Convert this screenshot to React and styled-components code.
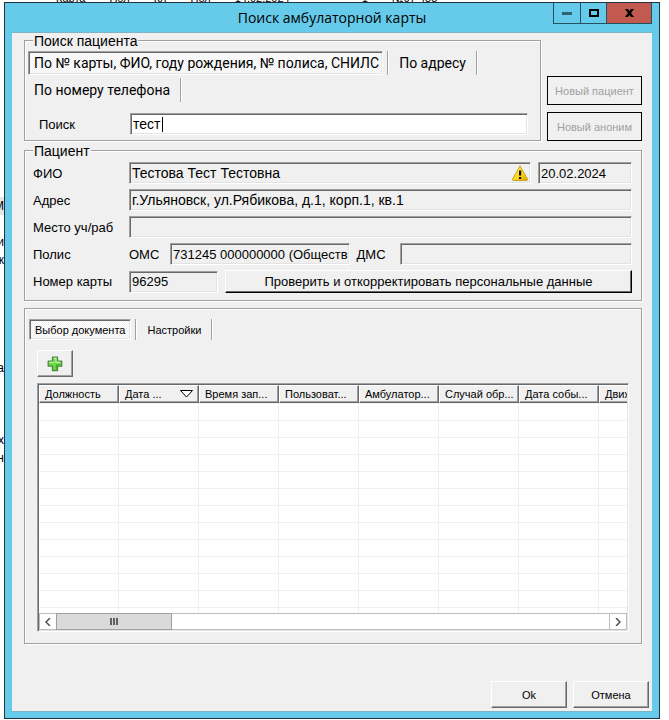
import React, { useState } from 'react';
import styled, { createGlobalStyle, css } from 'styled-components';

const GlobalStyle = createGlobalStyle`
  * {
    box-sizing: border-box;
  }

  body {
    margin: 0;
    background: #fff;
    color: #000;
    font-family: 'Liberation Sans', Arial, sans-serif;
    font-size: 14px;
  }

  button,
  input {
    font: inherit;
    color: inherit;
    border-radius: 0;
    outline: none;
  }
`;

const sunken = css`
  border: 1px solid;
  border-color: #a0a0a0 #fff #fff #a0a0a0;
  box-shadow: inset 1px 1px 0 #696969, inset -1px -1px 0 #e3e3e3;
`;

const raised = css`
  border: 1px solid;
  border-color: #fff #696969 #696969 #fff;
  box-shadow: inset -1px -1px 0 #a0a0a0;
`;

const etched = css`
  border: 1px solid #a0a0a0;
  box-shadow: inset 1px 1px 0 #fff, 1px 1px 0 #fff;
`;

/* ---------- what is seen behind the dialog ---------- */

const Desktop = styled.div`
  display: grid;
  grid-template-columns: 4px minmax(0, 1fr) 9px;
  grid-template-rows: 2px minmax(0, 1fr) 1px;
  height: 100vh;
  min-height: 640px;
  overflow: hidden;
`;

const BackTop = styled.div`
  grid-column: 1 / -1;
  display: flex;
  align-items: flex-end;
  gap: 24px;
  padding-left: 56px;
  overflow: hidden;
  font-size: 11px;
  line-height: 8px;
`;

const BackLeft = styled.div`
  grid-row: 2;
  margin-top: -3px;
  overflow: hidden;
  font-size: 12px;
  line-height: 18px;
`;

const BackLine = styled.div`
  display: flex;
  justify-content: flex-end;
  height: 18px;
  background: ${({ selected }) => (selected ? '#e6e6e6' : 'transparent')};
`;

/* ---------- window frame ---------- */

const Window = styled.div`
  grid-row: 2;
  grid-column: 2;
  display: flex;
  flex-direction: column;
  padding: 0 7px 6px;
  border: 1px solid #24343c;
  background: #66caea;
`;

const TitleBar = styled.header`
  display: grid;
  grid-template-columns: 1fr auto 1fr;
  height: 29px;
`;

const Title = styled.h1`
  grid-column: 2;
  margin: 0;
  font-family: 'Open Sans', 'Noto Sans', sans-serif;
  font-size: 14px;
  font-weight: 400;
  line-height: 29px;
  white-space: nowrap;
`;

const WindowButtons = styled.div`
  display: flex;
  justify-self: end;
  height: 21px;
  border: 1px solid #24505f;
  border-top: 0;
`;

const WindowButton = styled.button`
  display: flex;
  align-items: center;
  justify-content: center;
  width: ${({ close }) => (close ? '45px' : '26px')};
  padding: 0;
  border: 0;
  border-left: ${({ first }) => (first ? '0' : '1px solid #24505f')};
  background: ${({ close }) => (close ? '#c35a50' : 'transparent')};
`;

const Client = styled.main`
  display: flex;
  flex: 1;
  flex-direction: column;
  min-height: 0;
  border: 1px solid #7fb3c6;
  border-width: 1px 0;
  background: #f0f0f0;
`;

const Content = styled.div`
  display: flex;
  flex: 1;
  flex-direction: column;
  gap: 2px;
  min-height: 0;
  padding: 0 10px 0 12px;
`;

/* ---------- shared parts ---------- */

const Group = styled.fieldset`
  ${etched}
  min-width: 0;
  margin: 0;
  padding: 4px 3px 5px;
`;

const Legend = styled.legend`
  margin-left: 5px;
  padding: 2px 1px 0;
  background: #f0f0f0;
  line-height: 12px;
`;

const TabRow = styled.div`
  display: flex;
  flex-wrap: wrap;
  row-gap: 3px;
`;

const TabCell = styled.div`
  display: flex;
  padding-right: 4px;
  margin-right: ${({ active }) => (active ? '5px' : '0')};
  border-right: 1px solid #a0a0a0;
  box-shadow: 1px 0 0 #fff;
`;

const Tab = styled.button`
  height: ${({ small }) => (small ? '21px' : '24px')};
  padding: 0 5px;
  border: 1px solid transparent;
  background: transparent;
  font-family: ${({ small }) => (small ? 'inherit' : "Roboto, 'Liberation Sans', sans-serif")};
  font-size: ${({ small }) => (small ? '11px' : '14px')};
  white-space: nowrap;

  ${({ active }) =>
    active &&
    css`
      ${sunken}
      padding: ${({ small }) => (small ? '0 5px' : '0 3px 0 5px')};
      background: repeating-conic-gradient(#fff 0 25%, #f0f0f0 0 50%) 0 0 / 2px 2px;
    `}
`;

const Label = styled.label`
  white-space: nowrap;
`;

const Field = styled.input`
  ${sunken}
  width: 100%;
  min-width: 0;
  height: 22px;
  padding: 0 1px 0 2px;
  background: ${({ readOnly }) => (readOnly ? '#f0f0f0' : '#fff')};
  font-size: ${({ wide }) => (wide ? '14px' : '13px')};
`;

const PushButton = styled.button`
  ${raised}
  height: 27px;
  padding: 0;
  background: #f0f0f0;
  font-size: 11px;
`;

/* ---------- search ---------- */

const SearchArea = styled.div`
  display: grid;
  grid-template-columns: minmax(0, 1fr) 95px;
  column-gap: 6px;
`;

const SearchRow = styled.div`
  display: grid;
  grid-template-columns: 91px minmax(0, 1fr);
  align-items: center;
  padding: 11px 9px 0 11px;
  font-size: 13px;
`;

const SearchBox = styled.div`
  position: relative;
  display: flex;
`;

const Caret = styled.span`
  position: absolute;
  top: 4px;
  bottom: 3px;
  left: 32px;
  width: 1px;
  background: #000;
`;

const SideButtons = styled.div`
  display: flex;
  flex-direction: column;
  justify-content: flex-end;
  gap: 7px;
`;

const NewButton = styled.button`
  height: 29px;
  padding: 0;
  border: 1px solid #000;
  background: #f0f0f0;
  color: #a0a0a0;
  font-size: 11px;
`;

/* ---------- patient ---------- */

const PatientGrid = styled.div`
  display: grid;
  grid-template-columns: 96px minmax(0, 1fr);
  align-items: center;
  row-gap: 5px;
  padding: 1px 6px 2px 5px;
  font-size: 13px;
`;

const FieldLine = styled.div`
  display: grid;
  grid-template-columns: ${({ columns }) => columns};
  align-items: center;
  column-gap: 7px;
`;

const NameBox = styled.div`
  position: relative;
  display: flex;
`;

const WarningIcon = styled.svg`
  position: absolute;
  top: 3px;
  right: 3px;
`;

const CheckButton = styled.button`
  height: 23px;
  padding: 0;
  border: 1px solid;
  border-color: #fff #000 #000 #fff;
  box-shadow: inset -1px -1px 0 #696969;
  background: #f0f0f0;
  white-space: nowrap;
`;

/* ---------- documents ---------- */

const Documents = styled.section`
  ${etched}
  display: flex;
  flex: 1;
  flex-direction: column;
  min-height: 0;
  margin-top: 5px;
  padding: 10px 12px 11px 4px;
`;

const AddButton = styled(PushButton)`
  display: flex;
  align-items: center;
  justify-content: center;
  flex-shrink: 0;
  width: 36px;
  margin: 10px 0 6px 8px;
`;

const ListView = styled.div`
  ${sunken}
  display: flex;
  flex: 1;
  flex-direction: column;
  min-height: 0;
  margin-left: 8px;
  padding: 1px;
  background: #fff;
`;

const ListBody = styled.div`
  flex: 1;
  min-height: 0;
  overflow: hidden;
`;

const Table = styled.table`
  width: 640px;
  table-layout: fixed;
  border-collapse: separate;
  border-spacing: 0;
  font-size: 11px;
`;

const HeadCell = styled.th`
  height: 18px;
  padding: 0 5px;
  border: 1px solid;
  border-color: #fff #696969 #696969 #fff;
  box-shadow: inset -1px -1px 0 #a0a0a0;
  background: #f0f0f0;
  font-weight: 400;
  line-height: 14px;
  text-align: left;
  white-space: nowrap;
`;

const HeadText = styled.span`
  display: flex;
  align-items: center;
  justify-content: space-between;
`;

const Cell = styled.td`
  height: 17px;
  padding: 0;
  border-top: 1px solid #f0f0f0;
  border-right: 1px solid #f0f0f0;
`;

const ScrollBar = styled.div`
  display: grid;
  grid-template-columns: 16px minmax(0, 1fr) 17px;
  height: 17px;
  border: 1px solid #bcbcbc;
`;

const ScrollArrow = styled.button`
  display: flex;
  align-items: center;
  justify-content: center;
  padding: 0;
  border: 0 solid #bcbcbc;
  border-left-width: ${({ end }) => (end ? '1px' : '0')};
  background: #fff;
`;

const ScrollThumb = styled.div`
  display: flex;
  align-items: center;
  justify-content: center;
  gap: 1px;
  width: 21%;
  margin: -1px 0;
  border: 1px solid #a0a0a0;
  background: #dadada;
`;

const Grip = styled.i`
  width: 2px;
  height: 7px;
  background: #606060;
`;

const Footer = styled.footer`
  display: grid;
  grid-template-columns: 76px 76px;
  justify-content: end;
  column-gap: 6px;
  padding: 37px 3px 3px;
`;

const backLines = { 11: 'М', 13: 'и', 14: 'к', 20: 'а', 24: 'х', 25: 'н' };

const columns = [
  'Должность',
  'Дата ...',
  'Время зап...',
  'Пользоват...',
  'Амбулатор...',
  'Случай обр...',
  'Дата собы...',
  'Движение',
];

const rows = Array.from({ length: 13 }, (_, i) => i);

function Backdrop() {
  return (
    <>
      <BackTop aria-hidden="true">
        <span>Карта</span>
        <span>Пол</span>
        <span>Кл</span>
        <span>Пол</span>
        <span>14.02.2024</span>
        <span />
        <span />
        <span>1</span>
        <span>№97 488</span>
      </BackTop>
      <BackLeft aria-hidden="true">
        {Array.from({ length: 30 }, (_, i) => (
          <BackLine key={i} selected={i === 11}>{backLines[i]}</BackLine>
        ))}
      </BackLeft>
    </>
  );
}

function TitleButtons() {
  return (
    <WindowButtons>
      <WindowButton first aria-label="Свернуть">
        <svg width="10" height="3"><path d="M0 0h10v3H0z" fill="#2f6475" /></svg>
      </WindowButton>
      <WindowButton aria-label="Развернуть">
        <svg width="10" height="8"><path d="M1 1h8v6H1z" fill="none" stroke="#000" strokeWidth="2" /></svg>
      </WindowButton>
      <WindowButton close aria-label="Закрыть">
        <svg width="9" height="8" viewBox="0 0 9 8">
          <path d="M0 0h3l1.500 2L6 0h3L6 4l3 4H6L4.500 6 3 8H0l3-4z" fill="#000" />
        </svg>
      </WindowButton>
    </WindowButtons>
  );
}

function Warning() {
  return (
    <WarningIcon width="16" height="16" viewBox="0 0 16 16" role="img" aria-label="Внимание">
      <defs>
        <linearGradient id="warn" x1="0" y1="0" x2="1" y2="1">
          <stop offset="0" stopColor="#fff27a" />
          <stop offset="0.6" stopColor="#fbd51c" />
          <stop offset="1" stopColor="#dba400" />
        </linearGradient>
      </defs>
      <path d="M8 .8 15.500 14.200q.2 1.200-1 1.300h-13q-1.200-.1-1-1.300z" fill="url(#warn)" stroke="#c79c12" strokeWidth=".9" strokeLinejoin="round" />
      <path d="M7 5.500h2.200v5H7zM7 12h2.200v2H7z" fill="#111" />
    </WarningIcon>
  );
}

function Plus() {
  return (
    <svg width="16" height="16" viewBox="0 0 16 16">
      <path d="M5.500 1.200h5v4h4.200v5h-4.200v4.500h-5v-4.500H1.200v-5h4.300z" fill="#6fd943" stroke="#4b8a45" strokeWidth="1.300" strokeLinejoin="round" />
      <path d="M6.700 2.400h2.200v4H13M2.400 6.400h4.300" fill="none" stroke="#c4f5a4" strokeWidth="1.100" />
      <path d="M9.300 13.500V9H13.500" fill="none" stroke="#2fae1c" strokeWidth="1" />
    </svg>
  );
}

function Tabs({ items, small }) {
  return (
    <TabRow role="tablist">
      {items.map((item, index) => (
        <TabCell key={item} active={index === 0}>
          <Tab role="tab" aria-selected={index === 0} active={index === 0} small={small}>{item}</Tab>
        </TabCell>
      ))}
    </TabRow>
  );
}

function App() {
  const [query, setQuery] = useState('тест');

  return (
    <Desktop>
      <GlobalStyle />
      <Backdrop />
      <Window>
        <TitleBar>
          <Title>Поиск амбулаторной карты</Title>
          <TitleButtons />
        </TitleBar>
        <Client>
          <Content>
            <SearchArea>
              <Group>
                <Legend>Поиск пациента</Legend>
                <Tabs items={['По № карты, ФИО, году рождения, № полиса, СНИЛС', 'По адресу', 'По номеру телефона']} />
                <SearchRow>
                  <Label htmlFor="query">Поиск</Label>
                  <SearchBox>
                    <Field id="query" wide value={query} onChange={(e) => setQuery(e.target.value)} />
                    <Caret />
                  </SearchBox>
                </SearchRow>
              </Group>
              <SideButtons>
                <NewButton disabled>Новый пациент</NewButton>
                <NewButton disabled>Новый аноним</NewButton>
              </SideButtons>
            </SearchArea>

            <Group>
              <Legend>Пациент</Legend>
              <PatientGrid>
                <Label htmlFor="fio">ФИО</Label>
                <FieldLine columns="minmax(0, 1fr) 94px">
                  <NameBox>
                    <Field id="fio" wide readOnly value="Тестова Тест Тестовна" />
                    <Warning />
                  </NameBox>
                  <Field aria-label="Дата рождения" readOnly value="20.02.2024" />
                </FieldLine>

                <Label htmlFor="address">Адрес</Label>
                <Field id="address" wide readOnly value="г.Ульяновск, ул.Рябикова, д.1, корп.1, кв.1" />

                <Label htmlFor="work">Место уч/раб</Label>
                <Field id="work" readOnly value="" />

                <Label as="span">Полис</Label>
                <FieldLine columns="34px minmax(0, 180fr) 36px minmax(0, 233fr)">
                  <Label htmlFor="oms">ОМС</Label>
                  <Field id="oms" readOnly value="731245 000000000 (Обществ" />
                  <Label htmlFor="dms">ДМС</Label>
                  <Field id="dms" readOnly value="" />
                </FieldLine>

                <Label htmlFor="card">Номер карты</Label>
                <FieldLine columns="89px minmax(0, 1fr)">
                  <Field id="card" readOnly value="96295" />
                  <CheckButton>Проверить и откорректировать персональные данные</CheckButton>
                </FieldLine>
              </PatientGrid>
            </Group>

            <Documents>
              <Tabs small items={['Выбор документа', 'Настройки']} />
              <AddButton aria-label="Добавить"><Plus /></AddButton>
              <ListView>
                <ListBody>
                  <Table>
                    <thead>
                      <tr>
                        {columns.map((name, index) => (
                          <HeadCell key={name} scope="col">
                            <HeadText>
                              {name}
                              {index === 1 && (
                                <svg width="13" height="8"><path d="M.5.5h12l-6 6.500z" fill="#fff" stroke="#000" /></svg>
                              )}
                            </HeadText>
                          </HeadCell>
                        ))}
                      </tr>
                    </thead>
                    <tbody>
                      {rows.map((row) => (
                        <tr key={row}>
                          {columns.map((name) => <Cell key={name} />)}
                        </tr>
                      ))}
                    </tbody>
                  </Table>
                </ListBody>
                <ScrollBar>
                  <ScrollArrow aria-label="Влево">
                    <svg width="6" height="8"><path d="M5 0 1 4l4 4" fill="none" stroke="#505050" strokeWidth="1.500" /></svg>
                  </ScrollArrow>
                  <ScrollThumb><Grip /><Grip /><Grip /></ScrollThumb>
                  <ScrollArrow end aria-label="Вправо">
                    <svg width="6" height="8"><path d="m1 0 4 4-4 4" fill="none" stroke="#505050" strokeWidth="1.500" /></svg>
                  </ScrollArrow>
                </ScrollBar>
              </ListView>
            </Documents>
          </Content>
          <Footer>
            <PushButton>Ok</PushButton>
            <PushButton>Отмена</PushButton>
          </Footer>
        </Client>
      </Window>
    </Desktop>
  );
}

export default App;
